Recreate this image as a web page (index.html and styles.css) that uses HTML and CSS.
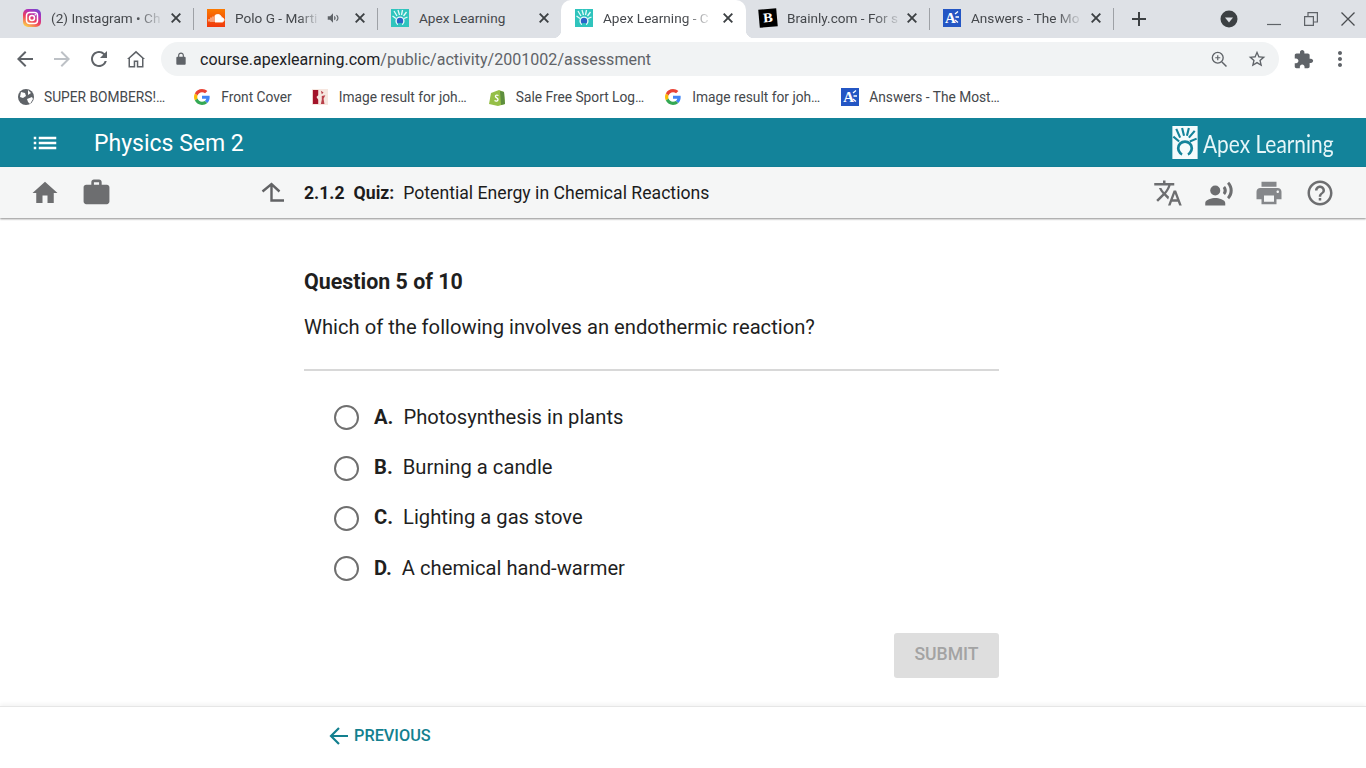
FILE: index.html
```html
<!DOCTYPE html>
<html lang="en">
<head>
    <meta charset="UTF-8">
    <meta name="viewport" content="width=device-width, initial-scale=1.0">
    <title>Apex Learning - Quiz</title>
    <link rel="stylesheet" href="styles.css">
</head>
<body>
    <!-- Shared favicons -->
    <svg class="sprite" aria-hidden="true">
        <symbol id="fav-apex" viewBox="0 0 18 18">
            <rect width="18" height="18" fill="#2fc4bd"/>
            <path d="M3 2l3 5M7 1l1.500 5M11.500 1l-1 5M15.500 3l-3 4M16.500 8l-3.500 1.500M1.500 7l3.500 2.500" stroke="#e8fbfa" stroke-width="1.300"/>
            <circle cx="9" cy="12" r="4.600" fill="#e8fbfa"/>
            <circle cx="9" cy="12" r="3.200" fill="#2a64c8"/>
            <path d="M6 18l1.500-4h3l1.500 4z" fill="#2fc4bd"/>
        </symbol>
        <symbol id="fav-google" viewBox="0 0 48 48">
            <path fill="#ea4335" d="M24 9.500c3.500 0 6.700 1.200 9.200 3.600l6.900-6.900C35.900 2.400 30.500 0 24 0 14.600 0 6.500 5.400 2.600 13.200l8 6.200C12.400 13.700 17.700 9.500 24 9.500z"/>
            <path fill="#4285f4" d="M47 24.500c0-1.600-.1-3.100-.4-4.500H24v9h12.900c-.6 3-2.200 5.500-4.800 7.200l7.700 6C44.300 38 47 31.800 47 24.500z"/>
            <path fill="#fbbc05" d="M10.600 28.600c-.5-1.400-.8-3-.8-4.600s.3-3.200.8-4.600l-8-6.200C.9 16.500 0 20.100 0 24s.9 7.500 2.600 10.800l8-6.200z"/>
            <path fill="#34a853" d="M24 48c6.500 0 11.900-2.100 15.900-5.800l-7.700-6c-2.200 1.500-4.900 2.300-8.200 2.300-6.300 0-11.600-4.200-13.400-9.900l-8 6.200C6.500 42.600 14.600 48 24 48z"/>
        </symbol>
        <symbol id="fav-answers" viewBox="0 0 18 18">
            <rect width="18" height="18" fill="#2456c4"/>
            <path d="M12 5l3-2.500M12.500 8H16M12 11l3 2.500" stroke="#fff" stroke-width="1.300"/>
        </symbol>
        <symbol id="icon-close" viewBox="0 0 10 10">
            <path d="M.7.700l8.600 8.600M9.300.700L.7 9.300" stroke="#3c4043" stroke-width="1.900"/>
        </symbol>
    </svg>

    <!-- Browser chrome -->
    <div class="tabstrip">
        <div class="tab">
            <span class="fav fav-insta"><svg viewBox="0 0 18 18" width="18" height="18"><rect x="3.500" y="3.500" width="11" height="11" rx="3" fill="none" stroke="#fff" stroke-width="1.500"/><circle cx="9" cy="9" r="2.500" fill="none" stroke="#fff" stroke-width="1.500"/><circle cx="12.300" cy="5.700" r=".8" fill="#fff"/></svg></span>
            <span class="tab-title">(2) Instagram • Ch</span>
            <svg class="tab-close"><use href="#icon-close"/></svg>
        </div>
        <i class="tab-sep"></i>
        <div class="tab">
            <span class="fav fav-sound"><svg viewBox="0 0 18 18" width="18" height="18"><path d="M8 13V6.500c.8-.7 1.800-1 2.800-1 2 0 3.500 1.300 3.800 3.200 1.300-.3 2.400.8 2.400 2.100 0 1.200-.8 2.200-1.800 2.200zM2 10v2.500M4 8.500v4.500M6 7.500V13" fill="#fff" stroke="#fff" stroke-width=".9"/></svg></span>
            <span class="tab-title">Polo G - Marti</span>
            <svg class="tab-sound" viewBox="0 0 24 24" width="14" height="14"><path d="M3 9v6h4l5 5V4L7 9H3zm13.500 3c0-1.800-1-3.300-2.500-4v8c1.500-.7 2.500-2.200 2.500-4z" fill="#5f6368"/><path d="M18 7c1.500 1.300 2.500 3 2.500 5s-1 3.700-2.500 5" fill="none" stroke="#5f6368" stroke-width="2"/></svg>
            <svg class="tab-close"><use href="#icon-close"/></svg>
        </div>
        <i class="tab-sep"></i>
        <div class="tab">
            <svg class="fav"><use href="#fav-apex"/></svg>
            <span class="tab-title tab-title-plain">Apex Learning</span>
            <svg class="tab-close"><use href="#icon-close"/></svg>
        </div>
        <i class="tab-sep tab-sep-off"></i>
        <div class="tab tab-active">
            <svg class="fav"><use href="#fav-apex"/></svg>
            <span class="tab-title">Apex Learning - C</span>
            <svg class="tab-close"><use href="#icon-close"/></svg>
        </div>
        <i class="tab-sep tab-sep-off"></i>
        <div class="tab">
            <span class="fav fav-brainly">B</span>
            <span class="tab-title">Brainly.com - For s</span>
            <svg class="tab-close"><use href="#icon-close"/></svg>
        </div>
        <i class="tab-sep"></i>
        <div class="tab">
            <span class="fav-wrap"><svg class="fav"><use href="#fav-answers"/></svg><b class="fav-letter">A</b></span>
            <span class="tab-title">Answers - The Mo</span>
            <svg class="tab-close"><use href="#icon-close"/></svg>
        </div>
        <i class="tab-sep"></i>
        <svg class="tab-new" viewBox="0 0 24 24" width="24" height="24"><path d="M19 13h-6v6h-2v-6H5v-2h6V5h2v6h6v2z" fill="#3c4043"/></svg>
        <div class="window-controls">
            <svg class="tab-search" viewBox="0 0 18 18" width="18" height="18"><circle cx="9" cy="9" r="8.500" fill="#3c4043"/><path d="M5 7.500h8L9 12.500z" fill="#dee1e6"/></svg>
            <svg viewBox="0 0 14 14" width="14" height="14"><path d="M0 12.500h14" stroke="#5f6368" stroke-width="1.200"/></svg>
            <svg viewBox="0 0 14 14" width="14" height="14"><path d="M.6 4.600h8.800v8.800H.6zM4 4.600V.6h9.400V10H9.400" fill="none" stroke="#5f6368" stroke-width="1.200"/></svg>
            <svg viewBox="0 0 14 14" width="14" height="14"><path d="M.5.500l13 13M13.500.500l-13 13" stroke="#4a4d51" stroke-width="1.300"/></svg>
        </div>
    </div>

    <div class="toolbar">
        <svg class="tool-icon" viewBox="0 0 24 24"><path d="M20 11H7.830l5.590-5.590L12 4l-8 8 8 8 1.410-1.410L7.830 13H20v-2z" fill="#5f6368"/></svg>
        <svg class="tool-icon" viewBox="0 0 24 24"><path d="M12 4l-1.410 1.410L16.170 11H4v2h12.170l-5.580 5.590L12 20l8-8z" fill="#bdc1c6"/></svg>
        <svg class="tool-icon" viewBox="0 0 24 24"><path d="M17.650 6.350A7.958 7.958 0 0012 4c-4.420 0-7.990 3.580-7.990 8s3.570 8 7.990 8c3.730 0 6.840-2.550 7.730-6h-2.080A5.990 5.990 0 0112 18c-3.310 0-6-2.690-6-6s2.690-6 6-6c1.660 0 3.140.69 4.220 1.780L13 11h7V4l-2.350 2.350z" fill="#5f6368"/></svg>
        <svg class="tool-icon" viewBox="0 0 24 24"><path d="M12 6l6 5.300V19h-3.700v-5.500H9.700V19H6v-7.700L12 6zm0-2.200L3 12h1.500v8.500h6.700V15h1.600v5.500h6.700V12H21L12 3.800z" fill="#5f6368"/></svg>
        <div class="omnibox">
            <svg class="lock" viewBox="0 0 24 24" width="14" height="14"><path d="M18 8h-1V6c0-2.760-2.240-5-5-5S7 3.240 7 6v2H6c-1.100 0-2 .9-2 2v10c0 1.100.9 2 2 2h12c1.100 0 2-.9 2-2V10c0-1.100-.9-2-2-2zM9 6c0-1.660 1.340-3 3-3s3 1.340 3 3v2H9V6z" fill="#5f6368"/></svg>
            <span class="url"><span class="url-host">course.apexlearning.com</span>/public/activity/2001002/assessment</span>
            <svg class="omni-icon" viewBox="0 0 24 24"><circle cx="10.500" cy="10.500" r="6.500" fill="none" stroke="#5f6368" stroke-width="1.600"/><path d="M15.500 15.500L21 21" stroke="#5f6368" stroke-width="1.800"/><path d="M10.500 7.500v6M7.500 10.500h6" stroke="#5f6368" stroke-width="1.400"/></svg>
            <svg class="omni-icon omni-star" viewBox="0 0 24 24"><path d="M22 9.240l-7.190-.62L12 2 9.190 8.630 2 9.240l5.460 4.730L5.820 21 12 17.270 18.180 21l-1.630-7.030L22 9.240zM12 15.400l-3.760 2.270 1-4.280-3.320-2.880 4.380-.38L12 6.100l1.710 4.040 4.380.38-3.320 2.880 1 4.280L12 15.400z" fill="#5f6368"/></svg>
        </div>
        <svg class="tool-ext" viewBox="0 0 24 24"><path d="M20.500 11H19V7c0-1.100-.9-2-2-2h-4V3.500C13 2.120 11.880 1 10.500 1S8 2.120 8 3.500V5H4c-1.100 0-1.990.9-1.990 2v3.800H3.500c1.490 0 2.700 1.210 2.700 2.700s-1.210 2.700-2.700 2.700H2V20c0 1.100.9 2 2 2h3.800v-1.500c0-1.490 1.210-2.700 2.700-2.700 1.490 0 2.700 1.210 2.700 2.700V22H17c1.100 0 2-.9 2-2v-4h1.500c1.380 0 2.500-1.120 2.500-2.500S21.880 11 20.500 11z" fill="#5f6368"/></svg>
        <svg class="tool-icon tool-more" viewBox="0 0 24 24"><path d="M12 8c1.100 0 2-.9 2-2s-.9-2-2-2-2 .9-2 2 .9 2 2 2zm0 2c-1.100 0-2 .9-2 2s.9 2 2 2 2-.9 2-2-.9-2-2-2zm0 6c-1.100 0-2 .9-2 2s.9 2 2 2 2-.9 2-2-.9-2-2-2z" fill="#5f6368"/></svg>
    </div>

    <div class="bookmarks">
        <div class="bookmark bookmark-first">
            <svg class="fav" viewBox="0 0 18 18"><circle cx="9" cy="9" r="8" fill="#5f6368"/><path d="M4 4l4 1 1 3-3 2-3-1zM11 2l3 3-3 2zM10 11l5-2 1 2-3 5-2-2z" fill="#fff"/></svg>
            <span>SUPER BOMBERS!…</span>
        </div>
        <div class="bookmark bookmark-wide bookmark-tight">
            <svg class="fav fav-g"><use href="#fav-google"/></svg>
            <span>Front Cover</span>
        </div>
        <div class="bookmark bookmark-wide">
            <svg class="fav fav-g" viewBox="0 0 18 18"><rect width="18" height="18" fill="#f6e6df"/><path d="M1 1h6v6l-2 2 2 3v5H1z" fill="#a3132a"/><path d="M10 2l3 2-2 2zM11 8l4-1-2 4 1 6h-4l1-5z" fill="#b8404a"/></svg>
            <span>Image result for joh…</span>
        </div>
        <div class="bookmark">
            <svg class="fav" viewBox="0 0 18 18"><path d="M3 5l8-3 5 2 1 12-7 2-9-2z" fill="#95bf47"/><path d="M12 3l1 14 4-1-1-12z" fill="#5e8e3e"/><path d="M10.500 7.500c-2-1-3.500 0-3 1.300s2.500 1 2.500 2.700-2 2-3.500 1" fill="none" stroke="#fff" stroke-width="1.300"/></svg>
            <span>Sale Free Sport Log…</span>
        </div>
        <div class="bookmark bookmark-wide">
            <svg class="fav fav-g"><use href="#fav-google"/></svg>
            <span>Image result for joh…</span>
        </div>
        <div class="bookmark">
            <span class="fav-wrap"><svg class="fav"><use href="#fav-answers"/></svg><b class="fav-letter">A</b></span>
            <span>Answers - The Most…</span>
        </div>
    </div>

    <!-- Course page -->
    <header class="course-bar">
        <svg class="course-menu" viewBox="0 0 24 24" width="30" height="30"><path d="M3 13h2v-2H3v2zm0 4h2v-2H3v2zm0-8h2V7H3v2zm4 4h14v-2H7v2zm0 4h14v-2H7v2zM7 7v2h14V7H7z" fill="#fff"/></svg>
        <h1 class="course-title">Physics Sem 2</h1>
        <div class="apex-logo">
            <svg viewBox="0 0 26 34" width="26" height="33"><rect width="26" height="34" fill="#f4fbfc"/><path d="M4 3l4 9M10 2l2 8M17 2l-2 8M23 5l-6 7M25 13l-7 3M1 11l6 5" stroke="#13839a" stroke-width="2.200"/><circle cx="13" cy="23" r="7" fill="none" stroke="#13839a" stroke-width="2.800"/><path d="M8 34l3-7h4l3 7z" fill="#f4fbfc"/></svg>
            <span class="apex-name">Apex Learning</span>
        </div>
    </header>

    <nav class="activity-bar">
        <svg class="bar-icon" viewBox="0 0 24 24"><path d="M10 20v-6h4v6h5v-8h3L12 3 2 12h3v8z"/></svg>
        <svg class="bar-icon bar-work" viewBox="0 0 24 24"><path d="M20 6h-4V4c0-1.110-.89-2-2-2h-4c-1.110 0-2 .89-2 2v2H4c-1.110 0-1.990.89-1.990 2L2 19c0 1.110.89 2 2 2h16c1.110 0 2-.89 2-2V8c0-1.110-.89-2-2-2zm-6 0h-4V4h4v2z"/></svg>
        <svg class="bar-up" viewBox="0 0 24 24" width="24" height="24"><path d="M1.500 10.500L10.500 3l8 7.500M10.500 3v16.500H23" fill="none" stroke="#626365" stroke-width="2.400"/></svg>
        <div class="activity-title"><b>2.1.2</b><b>Quiz:</b><span>Potential Energy in Chemical Reactions</span></div>
        <div class="bar-tools">
            <svg class="bar-icon" viewBox="0 0 24 24"><path d="M12.870 15.070l-2.540-2.510.03-.03c1.740-1.940 2.980-4.170 3.710-6.530H17V4h-7V2H8v2H1v1.990h11.170C11.500 7.920 10.440 9.750 9 11.350 8.070 10.320 7.300 9.190 6.690 8h-2c.73 1.630 1.730 3.170 2.980 4.560l-5.090 5.020L4 19l5-5 3.110 3.110.76-2.040zM18.500 10h-2L12 22h2l1.120-3h4.750L21 22h2l-4.500-12zm-2.620 7l1.620-4.330L19.120 17h-3.240z"/></svg>
            <svg class="bar-icon" viewBox="0 0 24 24"><circle cx="9" cy="10" r="4"/><path d="M9 16c-2.670 0-8 1.340-8 4v2h16v-2c0-2.660-5.330-4-8-4zm7.760-9.640l-1.680 1.690c.84 1.180.84 2.710 0 3.890l1.680 1.690c2.020-2.020 2.020-5.070 0-7.270zM20.070 3l-1.630 1.630c2.770 3.020 2.770 7.560 0 10.740L20.070 17c3.900-3.890 3.910-9.950 0-14z"/></svg>
            <svg class="bar-icon bar-print" viewBox="0 0 24 24"><path d="M19 8H5c-1.660 0-3 1.340-3 3v6h4v4h12v-4h4v-6c0-1.660-1.340-3-3-3zm-3 11H8v-5h8v5zm3-7c-.55 0-1-.45-1-1s.45-1 1-1 1 .45 1 1-.45 1-1 1zm-1-9H6v4h12V3z"/></svg>
            <svg class="bar-icon" viewBox="0 0 24 24"><path d="M11 18h2v-2h-2v2zm1-16C6.480 2 2 6.480 2 12s4.480 10 10 10 10-4.480 10-10S17.520 2 12 2zm0 18c-4.410 0-8-3.590-8-8s3.590-8 8-8 8 3.590 8 8-3.590 8-8 8zm0-14c-2.210 0-4 1.790-4 4h2c0-1.100.9-2 2-2s2 .9 2 2c0 2-3 1.750-3 5h2c0-2.250 3-2.500 3-5 0-2.210-1.790-4-4-4z"/></svg>
        </div>
    </nav>

    <main class="quiz">
        <h2>Question 5 of 10</h2>
        <p class="question">Which of the following involves an endothermic reaction?</p>
        <div class="choices">
            <label class="choice"><i class="radio"></i><b>A.</b><span>Photosynthesis in plants</span></label>
            <label class="choice"><i class="radio"></i><b>B.</b><span>Burning a candle</span></label>
            <label class="choice"><i class="radio"></i><b>C.</b><span>Lighting a gas stove</span></label>
            <label class="choice"><i class="radio"></i><b>D.</b><span>A chemical hand-warmer</span></label>
        </div>
        <div class="quiz-actions">
            <button class="submit" disabled>SUBMIT</button>
        </div>
    </main>

    <footer class="quiz-footer">
        <a class="previous">
            <svg viewBox="0 0 24 24" width="24" height="24"><path d="M21 12H4M12 4l-8 8 8 8" fill="none" stroke="#13808f" stroke-width="2.200"/></svg>
            PREVIOUS
        </a>
    </footer>
</body>
</html>
```

FILE: styles.css
```css
html, body {
    height: 100%;
}

body {
    margin: 0;
    height: 768px;
    overflow: hidden;
    display: flex;
    flex-direction: column;
    font-family: Roboto, "Liberation Sans", sans-serif;
    background-color: #fff;
    color: #1f1f1f;
}

.sprite {
    display: none;
}

/* Tabs */
.tabstrip {
    height: 38px;
    flex: none;
    display: flex;
    align-items: center;
    padding-left: 10px;
    background-color: #dee1e6;
}

.tab {
    width: 183px;
    height: 38px;
    box-sizing: border-box;
    flex: none;
    display: flex;
    align-items: center;
    padding: 0 12px 2px 13px;
    font-size: 13.600px;
    color: #45484c;
}

.tab-active {
    position: relative;
    width: 185px;
    margin: 0 -1px;
    padding: 0 13px 2px 14px;
    background-color: #fff;
    border-radius: 10px 10px 0 0;
}

/* the small curves where the active tab meets the toolbar */
.tab-active::before,
.tab-active::after {
    content: "";
    position: absolute;
    bottom: 0;
    width: 8px;
    height: 8px;
}

.tab-active::before {
    left: -8px;
    background: radial-gradient(circle at 0 0, transparent 8px, #fff 8.500px);
}

.tab-active::after {
    right: -8px;
    background: radial-gradient(circle at 100% 0, transparent 8px, #fff 8.500px);
}

.tab-sep {
    width: 1px;
    height: 22px;
    flex: none;
    background-color: #9ea1a6;
}

.tab-sep-off {
    background-color: transparent;
}

.fav {
    width: 18px;
    height: 18px;
    flex: none;
    display: block;
}

.fav-wrap {
    position: relative;
    width: 18px;
    height: 18px;
    flex: none;
}

.fav-letter {
    position: absolute;
    left: 2px;
    top: 1px;
    font-family: "Liberation Serif", serif;
    font-size: 15px;
    line-height: 17px;
    color: #fff;
}

.fav-insta {
    border-radius: 5px;
    background: linear-gradient(30deg, #fbd14b 8%, #ef3f5b 42%, #b12fb8 70%, #5a55d8);
}

.fav-sound {
    background: linear-gradient(180deg, #fb7a00, #f0380d);
}

.fav-brainly {
    background-color: #000;
    color: #fff;
    font-family: "DejaVu Serif", serif;
    font-weight: bold;
    font-size: 12px;
    line-height: 18px;
    text-align: center;
    transform: rotate(-5deg);
}

.tab-title {
    margin-left: 10px;
    white-space: nowrap;
    -webkit-mask-image: linear-gradient(90deg, #000 78%, rgba(0, 0, 0, .15) 100%);
    mask-image: linear-gradient(90deg, #000 78%, rgba(0, 0, 0, .15) 100%);
}

.tab-title-plain {
    -webkit-mask-image: none;
    mask-image: none;
}

.tab-sound {
    margin-left: 9px;
    flex: none;
}

.tab-close {
    margin-left: auto;
    width: 10px;
    height: 10px;
    flex: none;
}

.tab-new {
    margin-left: 13px;
    flex: none;
}

.window-controls {
    margin-left: auto;
    display: flex;
    align-items: center;
    gap: 23px;
    padding-right: 11px;
}

.tab-search {
    margin-right: 6px;
}

/* Toolbar */
.toolbar {
    height: 42px;
    flex: none;
    display: flex;
    align-items: center;
    padding-left: 13px;
    background-color: #fff;
}

.tool-icon {
    width: 24px;
    height: 24px;
    flex: none;
    margin-right: 13px;
}

.omnibox {
    width: 1118px;
    height: 34px;
    flex: none;
    box-sizing: border-box;
    display: flex;
    align-items: center;
    padding: 0 12px 0 13px;
    border-radius: 17px;
    background-color: #f1f3f4;
    font-size: 16px;
    color: #5f6368;
}

.url {
    margin-left: 12px;
    letter-spacing: .03px;
}

.url-host {
    color: #202124;
}

.omni-icon {
    width: 20px;
    height: 20px;
    flex: none;
    margin-left: auto;
}

.omni-star {
    margin-left: 18px;
}

.tool-ext {
    width: 21px;
    height: 21px;
    flex: none;
    margin-left: 14px;
}

.tool-more {
    margin: 0 0 0 14px;
}

/* Bookmarks */
.bookmarks {
    height: 38px;
    flex: none;
    box-sizing: border-box;
    display: flex;
    align-items: center;
    padding: 0 0 4px 17px;
    font-size: 13.750px;
    color: #45484c;
    background-color: #fff;
}

.bookmark {
    display: flex;
    align-items: center;
    gap: 10px;
    margin-right: 21px;
    white-space: nowrap;
}

.bookmark-first {
    margin-right: 29px;
    gap: 9px;
}

.bookmark-wide {
    gap: 11px;
}

.bookmark-tight {
    margin-right: 20px;
}

.fav-g {
    width: 16px;
    height: 16px;
}

/* Course header */
.course-bar {
    height: 49px;
    flex: none;
    box-sizing: border-box;
    display: flex;
    align-items: center;
    padding: 0 32px 0 30px;
    background-color: #13839a;
    color: #fff;
}

.course-title {
    margin: 2px 0 0 34px;
    font-size: 23px;
    font-weight: 400;
}

.apex-logo {
    margin-left: auto;
    display: flex;
    align-items: center;
    gap: 5px;
}

.apex-name {
    font-family: Lato, sans-serif;
    font-size: 25px;
    width: 131px;
    white-space: nowrap;
    transform: scaleX(.835);
    transform-origin: left center;
    color: #e6f6f8;
}

.activity-bar {
    height: 51px;
    flex: none;
    box-sizing: border-box;
    display: flex;
    align-items: center;
    padding: 0 31px 0 30px;
    background-color: #f5f6f6;
    box-shadow: 0 1px 2px rgba(0, 0, 0, .45);
}

.bar-icon {
    width: 30px;
    height: 30px;
    flex: none;
    fill: #6d6e70;
}

.bar-work {
    margin-left: 21px;
    width: 31px;
    height: 31px;
}

.bar-up {
    margin-left: 149px;
    flex: none;
}

.activity-title {
    margin-left: 19px;
    display: flex;
    gap: 9px;
    font-size: 17.650px;
    color: #1c1c1c;
}

.bar-tools {
    margin-left: auto;
    display: flex;
    align-items: center;
    gap: 20.700px;
}

.bar-print {
    fill: #85878a;
}

/* Quiz */
.quiz {
    flex: 1;
    min-height: 0;
    width: 695px;
    margin-left: 304px;
    display: flex;
    flex-direction: column;
}

.quiz h2 {
    margin: 50px 0 0;
    font-size: 21.400px;
    line-height: 28px;
    font-weight: bold;
}

.question {
    margin: 17px 0 0;
    padding-bottom: 28px;
    font-size: 20.200px;
    line-height: 28px;
    border-bottom: 2px solid #d8d8d8;
}

.choices {
    padding: 20.700px 0 0 30px;
}

.choice {
    height: 50.300px;
    display: flex;
    align-items: center;
    font-size: 20.200px;
}

.radio {
    width: 21px;
    height: 21px;
    border: 2px solid #6f6f6f;
    border-radius: 50%;
    margin-right: 15px;
    margin-top: 2px;
    flex: none;
}

.choice b {
    margin-right: 10px;
}

.quiz-actions {
    display: flex;
    justify-content: flex-end;
    margin-top: 40.300px;
}

.submit {
    width: 105px;
    height: 45px;
    padding: 0 0 3px;
    border: none;
    border-radius: 3px;
    background-color: #dedede;
    color: #a3a3a3;
    font-family: Roboto, sans-serif;
    font-size: 17.600px;
    font-weight: 500;
}

.quiz-footer {
    height: 62px;
    flex: none;
    box-sizing: border-box;
    display: flex;
    align-items: center;
    padding: 0 0 5px 327px;
    border-top: 1px solid #e6e6e6;
    box-shadow: 0 -2px 4px rgba(0, 0, 0, .05);
}

.previous {
    display: flex;
    align-items: center;
    gap: 3px;
    font-size: 16.300px;
    font-weight: 500;
    color: #13808f;
}

.previous svg {
    margin-top: 2px;
}
```
